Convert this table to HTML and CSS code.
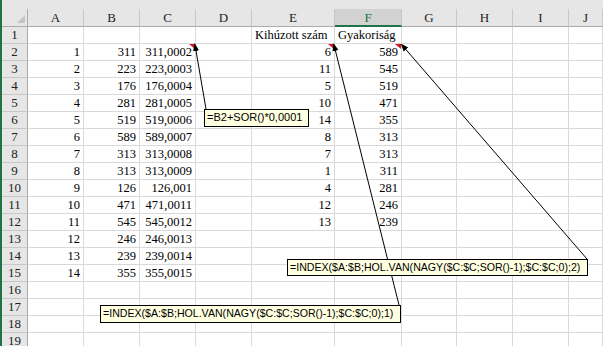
FILE: index.html
```html
<!DOCTYPE html>
<html>
<head>
<meta charset="utf-8">
<link rel="stylesheet" href="styles.css">
</head>
<body>
<div class="app">
  <div class="topbar"></div>
  <div class="sheet">
    <div class="corner"></div><div class="ch">A</div><div class="ch">B</div><div class="ch">C</div><div class="ch">D</div><div class="ch">E</div><div class="ch sel">F</div><div class="ch">G</div><div class="ch">H</div><div class="ch">I</div><div class="ch">J</div>
    <div class="rh">1</div><div></div><div></div><div></div><div></div><div class="t">Kihúzott szám</div><div class="t">Gyakoriság</div><div></div><div></div><div></div><div></div>
    <div class="rh">2</div><div>1</div><div>311</div><div class="cm">311,0002</div><div></div><div class="cm">6</div><div class="cm">589</div><div></div><div></div><div></div><div></div>
    <div class="rh">3</div><div>2</div><div>223</div><div>223,0003</div><div></div><div>11</div><div>545</div><div></div><div></div><div></div><div></div>
    <div class="rh">4</div><div>3</div><div>176</div><div>176,0004</div><div></div><div>5</div><div>519</div><div></div><div></div><div></div><div></div>
    <div class="rh">5</div><div>4</div><div>281</div><div>281,0005</div><div></div><div>10</div><div>471</div><div></div><div></div><div></div><div></div>
    <div class="rh">6</div><div>5</div><div>519</div><div>519,0006</div><div></div><div>14</div><div>355</div><div></div><div></div><div></div><div></div>
    <div class="rh">7</div><div>6</div><div>589</div><div>589,0007</div><div></div><div>8</div><div>313</div><div></div><div></div><div></div><div></div>
    <div class="rh">8</div><div>7</div><div>313</div><div>313,0008</div><div></div><div>7</div><div>313</div><div></div><div></div><div></div><div></div>
    <div class="rh">9</div><div>8</div><div>313</div><div>313,0009</div><div></div><div>1</div><div>311</div><div></div><div></div><div></div><div></div>
    <div class="rh">10</div><div>9</div><div>126</div><div>126,001</div><div></div><div>4</div><div>281</div><div></div><div></div><div></div><div></div>
    <div class="rh">11</div><div>10</div><div>471</div><div>471,0011</div><div></div><div>12</div><div>246</div><div></div><div></div><div></div><div></div>
    <div class="rh">12</div><div>11</div><div>545</div><div>545,0012</div><div></div><div>13</div><div>239</div><div></div><div></div><div></div><div></div>
    <div class="rh">13</div><div>12</div><div>246</div><div>246,0013</div><div></div><div></div><div></div><div></div><div></div><div></div><div></div>
    <div class="rh">14</div><div>13</div><div>239</div><div>239,0014</div><div></div><div></div><div></div><div></div><div></div><div></div><div></div>
    <div class="rh">15</div><div>14</div><div>355</div><div>355,0015</div><div></div><div></div><div></div><div></div><div></div><div></div><div></div>
    <div class="rh">16</div><div></div><div></div><div></div><div></div><div></div><div></div><div></div><div></div><div></div><div></div>
    <div class="rh">17</div><div></div><div></div><div></div><div></div><div></div><div></div><div></div><div></div><div></div><div></div>
    <div class="rh">18</div><div></div><div></div><div></div><div></div><div></div><div></div><div></div><div></div><div></div><div></div>
    <div class="rh">19</div><div></div><div></div><div></div><div></div><div></div><div></div><div></div><div></div><div></div><div></div>
  </div>
</div>
<svg class="arrows" width="603" height="346" viewBox="0 0 603 346">
  <defs>
    <marker id="dot" markerWidth="8" markerHeight="8" refX="6" refY="4" orient="auto" markerUnits="userSpaceOnUse">
      <path d="M0,1 L8,4 L0,7 Z" fill="#000"/>
    </marker>
  </defs>
  <line x1="206" y1="109" x2="195" y2="45" stroke="#000" stroke-width="1" marker-end="url(#dot)"/>
  <line x1="399" y1="305" x2="334" y2="45" stroke="#000" stroke-width="1" marker-end="url(#dot)"/>
  <line x1="587" y1="259" x2="402" y2="45" stroke="#000" stroke-width="1" marker-end="url(#dot)"/>
</svg>
<div class="note n1">=B2+SOR()*0,0001</div>
<div class="note n2">=INDEX($A:$B;HOL.VAN(NAGY($C:$C;SOR()-1);$C:$C;0);2)</div>
<div class="note n3">=INDEX($A:$B;HOL.VAN(NAGY($C:$C;SOR()-1);$C:$C;0);1)</div>
</body>
</html>
```
FILE: styles.css
```css
html, body {
  margin: 0;
  padding: 0;
}
body {
  width: 603px;
  height: 346px;
  overflow: hidden;
  position: relative;
  background: #fff;
  font-family: "Liberation Serif", "Times New Roman", serif;
  color: #000;
}
.app {
  border-left: 2px solid #217346;
  height: 346px;
  box-sizing: border-box;
}
.topbar {
  height: 9px;
  background: #e6e6e6;
}
.sheet {
  display: grid;
  grid-template-columns: 26px 56px 56px 56px 56px 83px 67px 55px 56px 56px 1fr;
  grid-template-rows: 18px;
  grid-auto-rows: 17px;
}
.sheet > div {
  box-sizing: border-box;
  border-right: 1px solid #d9d9d9;
  border-bottom: 1px solid #d9d9d9;
  padding: 0 3px;
  font-size: 12.5px;
  line-height: 16px;
  text-align: right;
  white-space: nowrap;
  position: relative;
}
.sheet > .t {
  text-align: left;
  padding-left: 3px;
}
.sheet > .ch {
  background: #e6e6e6;
  border-right: 1px solid #c8c8c8;
  border-bottom: 1px solid #ababab;
  text-align: center;
  color: #222;
  font-size: 13px;
  line-height: 18px;
  padding: 0;
}
.sheet > .ch.sel {
  background: #d2d2d2;
  color: #217346;
  border-bottom: 2px solid #217346;
}
.sheet > .corner {
  background: #e6e6e6;
  border-right: 1px solid #ababab;
  border-bottom: 1px solid #ababab;
  padding: 0;
}
.corner::after {
  content: "";
  position: absolute;
  right: 2px;
  bottom: 3px;
  border-left: 8px solid transparent;
  border-bottom: 8px solid #c4c4c4;
}
.sheet > .rh {
  background: #e6e6e6;
  border-right: 1px solid #ababab;
  border-bottom: 1px solid #c8c8c8;
  text-align: center;
  color: #222;
  font-size: 13px;
  padding: 0;
}
.cm::after {
  content: "";
  position: absolute;
  top: 0;
  right: 0;
  border-top: 5px solid #d0141e;
  border-left: 6px solid transparent;
}
.arrows {
  position: absolute;
  left: 0;
  top: 0;
}
.note {
  position: absolute;
  box-sizing: border-box;
  background: #ffffe1;
  border: 1px solid #000;
  font-family: "Liberation Sans", Arial, sans-serif;
  font-size: 10.6px;
  line-height: 15px;
  padding: 0 2px;
  white-space: nowrap;
  color: #000;
}
.n1 {
  left: 204px;
  top: 109px;
  width: 105px;
  height: 18px;
  font-size: 11px;
}
.n2 {
  left: 287px;
  top: 259px;
  width: 301px;
  height: 17px;
}
.n3 {
  left: 100px;
  top: 305px;
  width: 301px;
  height: 18px;
}
```
